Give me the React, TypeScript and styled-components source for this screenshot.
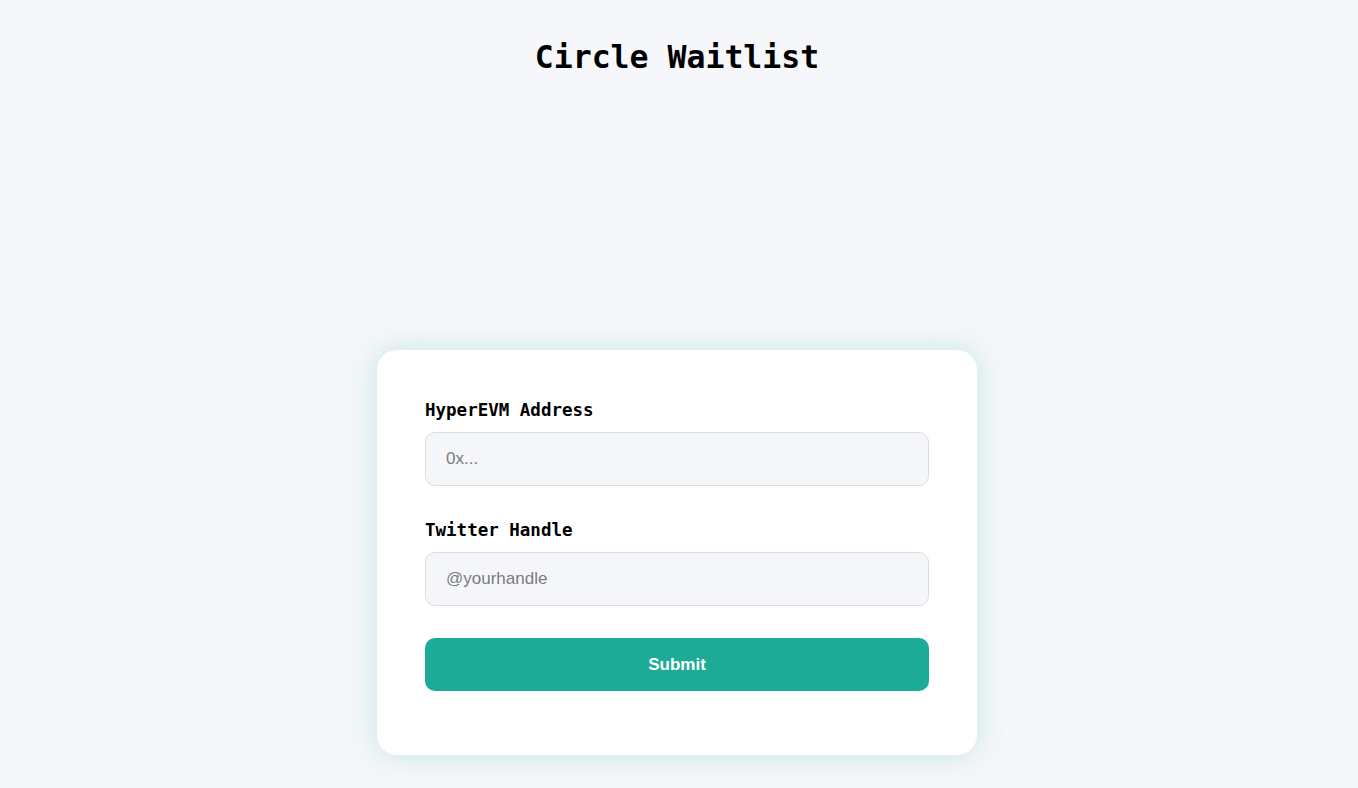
import React from 'react';
import styled, { createGlobalStyle } from 'styled-components';

const GlobalStyle = createGlobalStyle`
  html, body {
    margin: 0;
    padding: 0;
    background: #f5f7fa;
  }
  body {
    font-family: "Liberation Sans", Arial, sans-serif;
  }
`;

const Page = styled.main`
  min-height: 788px;
  display: flex;
  flex-direction: column;
  align-items: center;
  box-sizing: border-box;
  padding: 37px 4px 0 0;
`;

const Title = styled.h1`
  margin: 0;
  font-family: "DejaVu Sans Mono", "Liberation Mono", monospace;
  font-size: 31.5px;
  line-height: 40px;
  font-weight: 700;
  color: #000;
`;

const Card = styled.form`
  margin-top: 273px;
  width: 600px;
  box-sizing: border-box;
  padding: 48px 48px 64px;
  background: #fff;
  border-radius: 20px;
  box-shadow: 0 0 30px rgba(28, 171, 150, 0.22);
  display: flex;
  flex-direction: column;
`;

const Field = styled.div`
  display: flex;
  flex-direction: column;
  gap: 10px;
  margin-bottom: 32px;
`;

const Label = styled.label`
  font-family: "DejaVu Sans Mono", "Liberation Mono", monospace;
  font-size: 17.5px;
  line-height: 24px;
  font-weight: 700;
  color: #000;
`;

const Input = styled.input`
  height: 54px;
  box-sizing: border-box;
  padding: 0 20px;
  border: 1px solid #dcdde2;
  border-radius: 10px;
  background: #f5f6fa;
  font-family: "Liberation Sans", Arial, sans-serif;
  font-size: 17px;
  color: #222;
  outline: none;
  &::placeholder {
    color: #7b7b80;
  }
`;

const SubmitButton = styled.button`
  height: 53px;
  border: none;
  border-radius: 10px;
  background: #1cab96;
  color: #fff;
  font-family: "Liberation Sans", Arial, sans-serif;
  font-size: 17px;
  font-weight: 700;
  cursor: pointer;
`;

export default function App() {
  return (
    <>
      <GlobalStyle />
      <Page>
        <Title>Circle Waitlist</Title>
        <Card onSubmit={(e) => e.preventDefault()}>
          <Field>
            <Label htmlFor="address">HyperEVM Address</Label>
            <Input id="address" placeholder="0x..." />
          </Field>
          <Field>
            <Label htmlFor="twitter">Twitter Handle</Label>
            <Input id="twitter" placeholder="@yourhandle" />
          </Field>
          <SubmitButton type="submit">Submit</SubmitButton>
        </Card>
      </Page>
    </>
  );
}
